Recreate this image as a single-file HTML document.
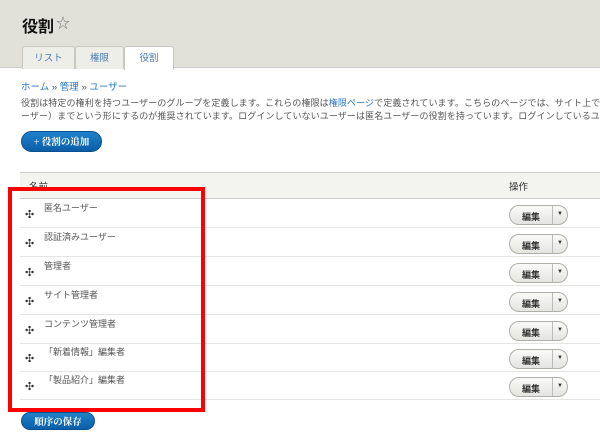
<!DOCTYPE html>
<html><head><meta charset="utf-8"><style>
*{margin:0;padding:0;box-sizing:border-box}
body{width:600px;height:441px;overflow:hidden;background:#fff;font-family:"Liberation Sans","Noto Sans CJK JP",sans-serif;color:#333;position:relative}
.hdr{position:absolute;left:0;top:0;width:600px;height:68px;background:#e1e1d9;border-bottom:1px solid #ccc}
.title{position:absolute;left:22px;top:13px;font-size:16px;font-weight:bold;color:#111}
.star{position:absolute;left:56px;top:13px;font-size:14px;color:#777}
.tab{position:absolute;top:46px;height:23px;border:1px solid #c8c8c0;border-bottom:none;background:#eeeee8;font-size:9.5px;color:#4b7db3;text-align:center;line-height:23px;border-radius:3px 3px 0 0}
.lk{color:#2d78c0}
.bc{position:absolute;left:21px;top:79px;font-size:9.5px;color:#2d78c0}
.desc{position:absolute;left:21px;top:97px;width:579px;overflow:hidden;font-size:9px;line-height:13px;white-space:nowrap;color:#555;letter-spacing:0.1px}
.btn{position:absolute;background:linear-gradient(#1f81c9,#0b5ea8);border:1px solid #0a4f8f;border-radius:11px;color:#fff;font-weight:bold;font-size:9.5px;text-align:center;font-family:"Noto Serif CJK SC",serif}
.th{position:absolute;left:20px;top:172px;width:580px;height:27px;background:#f3f3ef;border-top:1px solid #ccc;border-bottom:1px solid #ccc;font-size:9.5px}
.row{position:absolute;left:20px;width:580px;height:29px;border-bottom:1px solid #e4e4e0;font-size:9px;color:#555}
.row .n{position:absolute;left:24px;top:2px}
.row .d{position:absolute;left:5px;top:9px;font-size:11px;color:#333}
.eb{position:absolute;left:489px;top:6px;width:59px;height:20px;border:1px solid #b0b0a8;border-radius:10px;background:linear-gradient(#fafaf8,#e4e4e0);font-size:9px;font-weight:bold;color:#333}
.eb span{position:absolute;left:12px;top:4px}
.eb i{position:absolute;left:42px;top:0;height:18px;border-left:1px solid #bbb;width:1px}
.eb b{position:absolute;left:47px;top:5px;font-size:6px}
.red{position:absolute;left:8px;top:187px;width:197px;height:225px;border:4px solid #f00}
</style></head><body>
<div class="hdr"></div>
<div class="title">役割</div><div class="star">☆</div>
<div class="tab" style="left:22px;width:53px">リスト</div>
<div class="tab" style="left:75px;width:49px">権限</div>
<div class="tab" style="left:124px;width:50px;background:#fff;height:24px">役割</div>
<div class="bc">ホーム <span style="color:#555">»</span> 管理 <span style="color:#555">»</span> ユーザー</div>
<div class="desc">役割は特定の権利を持つユーザーのグループを定義します。これらの権限は<span class="lk">権限ページ</span>で定義されています。こちらのページでは、サイト上での役割の名前と表示順序<br>ーザー）までという形にするのが推奨されています。ログインしていないユーザーは匿名ユーザーの役割を持っています。ログインしているユーザーは認証ユーザーの役割</div>
<div class="btn" style="left:21px;top:131px;width:81px;height:21px;line-height:19px">+ 役割の追加</div>
<div class="th"><span style="position:absolute;left:9px;top:6px">名前</span><span style="position:absolute;left:489px;top:6px">操作</span></div>
<div class="row" style="top:199px"><span class="n">匿名ユーザー</span><span class="d">✣</span><div class="eb"><span>編集</span><i></i><b>▼</b></div></div>
<div class="row" style="top:228px"><span class="n">認証済みユーザー</span><span class="d">✣</span><div class="eb"><span>編集</span><i></i><b>▼</b></div></div>
<div class="row" style="top:257px"><span class="n">管理者</span><span class="d">✣</span><div class="eb"><span>編集</span><i></i><b>▼</b></div></div>
<div class="row" style="top:286px"><span class="n">サイト管理者</span><span class="d">✣</span><div class="eb"><span>編集</span><i></i><b>▼</b></div></div>
<div class="row" style="top:315px"><span class="n">コンテンツ管理者</span><span class="d">✣</span><div class="eb"><span>編集</span><i></i><b>▼</b></div></div>
<div class="row" style="top:343px"><span class="n">「新着情報」編集者</span><span class="d">✣</span><div class="eb"><span>編集</span><i></i><b>▼</b></div></div>
<div class="row" style="top:371px"><span class="n">「製品紹介」編集者</span><span class="d">✣</span><div class="eb"><span>編集</span><i></i><b>▼</b></div></div>
<div class="red"></div>
<div class="btn" style="left:21px;top:412px;width:74px;height:18px;line-height:16px">順序の保存</div>
</body></html>
